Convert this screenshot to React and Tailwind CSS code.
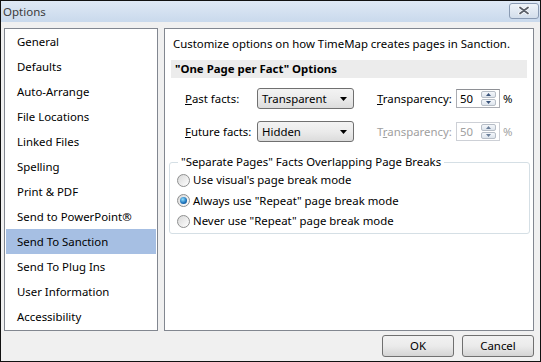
import React from "react";

const items = [
  "General",
  "Defaults",
  "Auto-Arrange",
  "File Locations",
  "Linked Files",
  "Spelling",
  "Print & PDF",
  "Send to PowerPoint®",
  "Send To Sanction",
  "Send To Plug Ins",
  "User Information",
  "Accessibility",
];

const Dropdown = ({ value }) => (
  <div className="flex h-[21px] w-[97px] items-center justify-between rounded-[3px] border border-[#707070] bg-linear-to-b from-[#f3f3f3] via-[#ebebeb] to-[#dcdcdc] pl-[4px] pr-[6px] text-black">
    <span>{value}</span>
    <svg width="7" height="4" viewBox="0 0 7 4">
      <path d="M0 0h7L3.5 4z" fill="#000" />
    </svg>
  </div>
);

const Spin = ({ disabled }) => (
  <div
    className={
      disabled
        ? "flex h-[19px] w-[44px] items-center border border-[#cdd0d6] bg-white pl-[3px] text-[#a0a0a0]"
        : "flex h-[19px] w-[44px] items-center border border-[#abadb3] border-t-[#8e9095] bg-white pl-[3px] text-black"
    }
  >
    <span>50</span>
    <div className="ml-auto mr-[3px] flex flex-col gap-[1px]">
      {[0, 1].map((i) => (
        <div
          key={i}
          className="flex h-[7px] w-[15px] items-center justify-center rounded-[2px] border border-[#b6bdc6] bg-linear-to-b from-[#f4f7fb] to-[#dde4ec]"
        >
          <svg width="5" height="3" viewBox="0 0 5 3">
            <path d={i === 0 ? "M0 3h5L2.5 0z" : "M0 0h5L2.5 3z"} fill={disabled ? "#6b7f99" : "#39537a"} />
          </svg>
        </div>
      ))}
    </div>
  </div>
);

const Radio = ({ checked, label }) => (
  <div className="flex h-[20.5px] items-center gap-[3px]">
    <span className="flex h-[13px] w-[13px] items-center justify-center rounded-full border border-[#8e8f8f] bg-linear-to-br from-[#d8d8d8] to-[#ffffff]">
      {checked && (
        <span className="h-[7px] w-[7px] rounded-full bg-[radial-gradient(circle_at_40%_35%,#8fe0ff,#1a6fb8_60%,#0b3f7a)]" />
      )}
    </span>
    <span>{label}</span>
  </div>
);

const Button = ({ children }) => (
  <button className="flex h-[22px] w-[72px] items-center justify-center rounded-[3px] border border-[#707070] bg-linear-to-b from-[#f2f2f2] via-[#ebebeb] to-[#d4d4d4] text-black">
    {children}
  </button>
);

export default function App() {
  return (
    <div className="flex h-[362px] w-[541px] flex-col border border-[#111] bg-[#f0f0f0] font-['Noto_Sans',sans-serif] text-[11.4px] leading-[16px] text-black">
      {/* title bar */}
      <div className="flex h-[21px] items-center justify-between bg-linear-to-b from-[#dfe9f5] to-[#c9d9ec] pl-[2px] pr-[1px]">
        <span className="text-[11.5px] text-[#3b3b3b]">Options</span>
        <div className="mt-[-2px] flex h-[16px] w-[30px] items-center justify-center rounded-[3px] border border-[#8a9bb3] bg-linear-to-b from-[#eef3f9] to-[#d3deeb]">
          <svg width="12" height="9" viewBox="0 0 12 9">
            <path d="M2 1.5l8 6M10 1.5l-8 6" stroke="#fff" strokeWidth="3.4" strokeLinecap="round" />
            <path d="M2 1.5l8 6M10 1.5l-8 6" stroke="#5b6069" strokeWidth="1.8" strokeLinecap="round" />
          </svg>
        </div>
      </div>

      {/* main */}
      <div className="flex gap-[6px] pl-[3px] pt-[6px]">
        {/* list */}
        <div className="h-[303px] w-[154px] border border-[#828790] bg-white px-[1px]">
          {items.map((item) => (
            <div
              key={item}
              className={
                item === "Send To Sanction"
                  ? "flex h-[25px] items-center bg-[#a6bfe3] pl-[11px]"
                  : "flex h-[25px] items-center pl-[11px]"
              }
            >
              {item}
            </div>
          ))}
        </div>

        {/* settings */}
        <div className="h-[303px] w-[370px] border border-[#828790] bg-white pt-[7px]">
          <p className="pl-[8px]">Customize options on how TimeMap creates pages in Sanction.</p>
          <div className="ml-[6px] mt-[8px] flex h-[18px] w-[356px] items-center bg-[#ececec] pl-[4px] font-bold">
            "One Page per Fact" Options
          </div>

          <div className="ml-[20px] mt-[10px] flex items-center">
            <span className="w-[72px]">
              <u>P</u>ast facts:
            </span>
            <Dropdown value="Transparent" />
            <span className="ml-[23px] w-[79px]">
              <u>T</u>ransparency:
            </span>
            <Spin />
            <span className="ml-[3px]">%</span>
          </div>

          <div className="ml-[20px] mt-[12px] flex items-center">
            <span className="w-[72px]">
              <u>F</u>uture facts:
            </span>
            <Dropdown value="Hidden" />
            <span className="ml-[23px] w-[79px] text-[#a0a0a0]">
              T<u>r</u>ansparency:
            </span>
            <Spin disabled />
            <span className="ml-[3px] text-[#a0a0a0]">%</span>
          </div>

          <fieldset className="ml-[4px] mt-[12px] w-[361px] rounded-[3px] border border-[#d5dfe5] pb-[1px] pl-[7px]">
            <legend className="ml-[1px] px-[3px]">"Separate Pages" Facts Overlapping Page Breaks</legend>
            <Radio label="Use visual's page break mode" />
            <Radio checked label={'Always use "Repeat" page break mode'} />
            <Radio label={'Never use "Repeat" page break mode'} />
          </fieldset>
        </div>
      </div>

      {/* footer */}
      <div className="flex justify-end gap-[8px] pr-[6px] pt-[4px]">
        <Button>OK</Button>
        <Button>Cancel</Button>
      </div>
    </div>
  );
}
